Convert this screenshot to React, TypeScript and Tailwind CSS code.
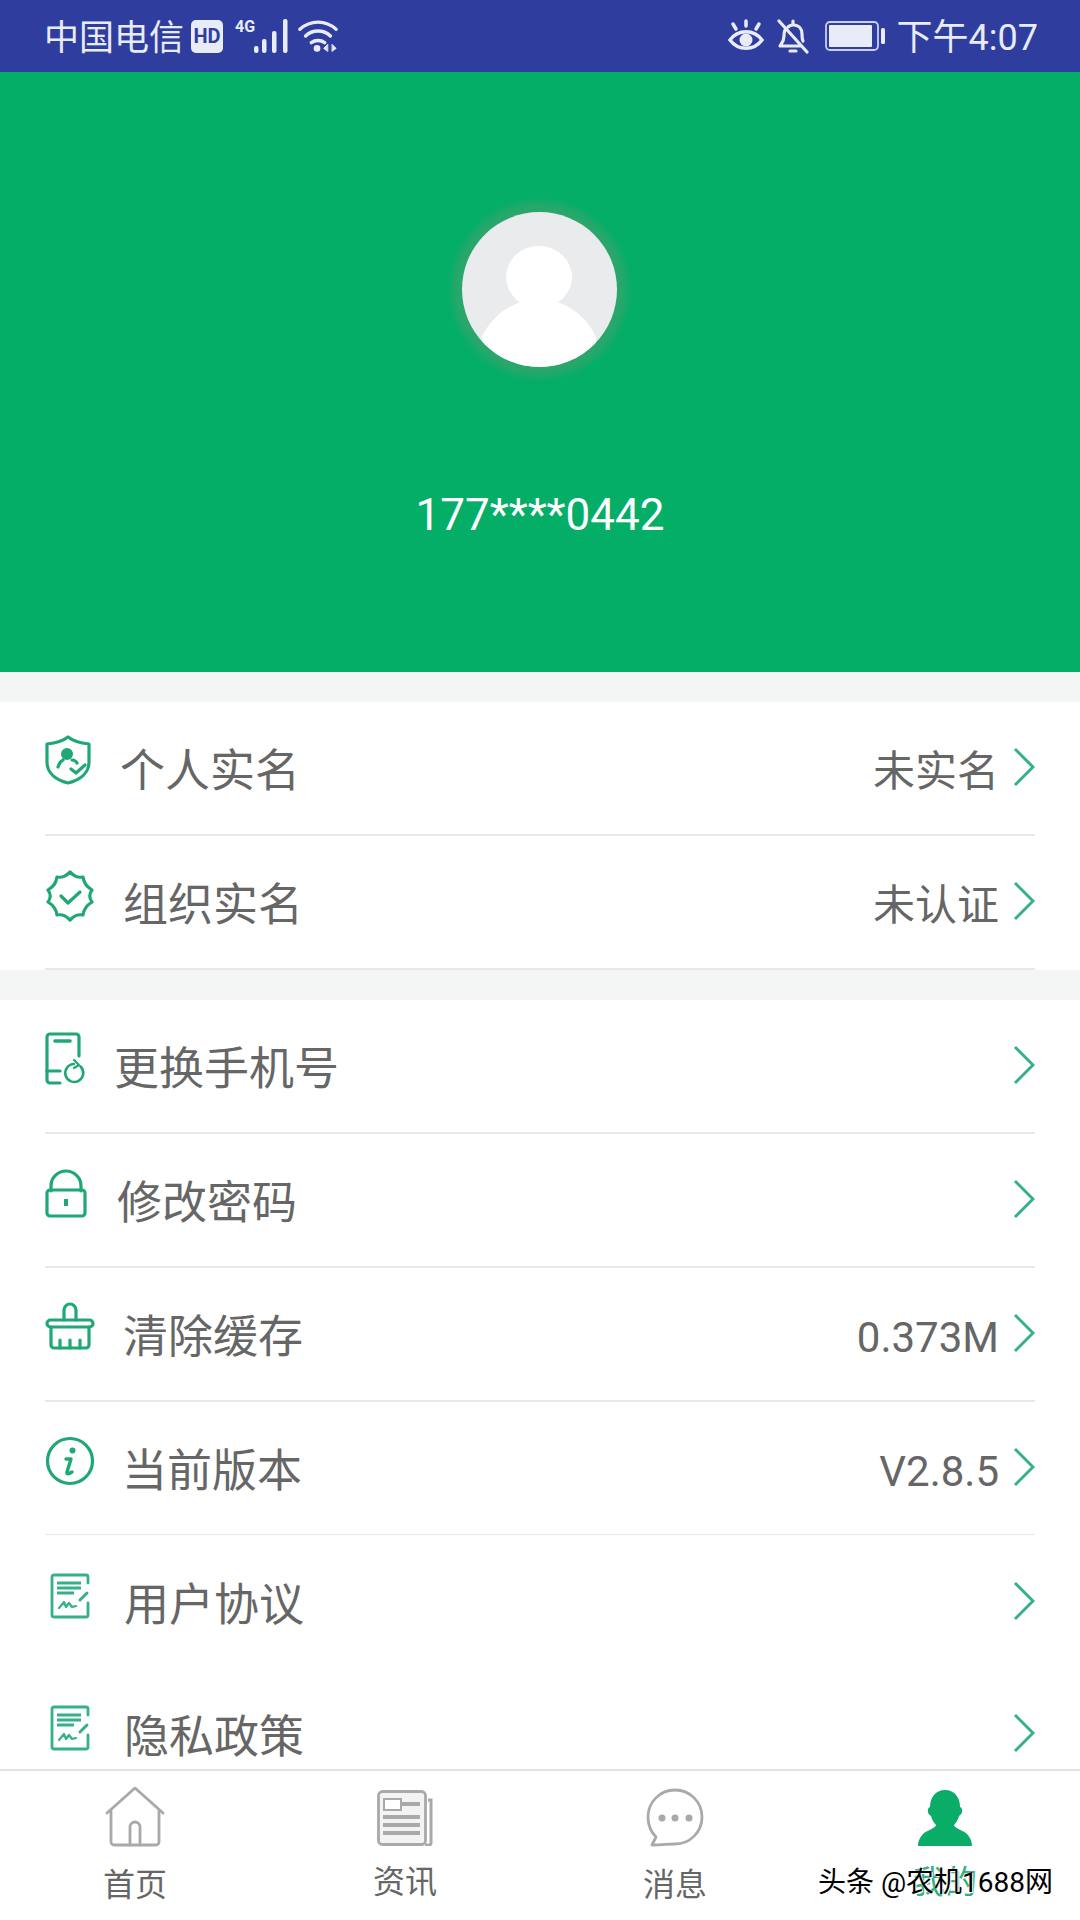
import { ReactNode } from "react";

const GREEN = "#1fa874";

function Chevron() {
  return (
    <svg className="-mt-[2px]" width="22" height="40" viewBox="0 0 22 40" fill="none" stroke="#35b088" strokeWidth="3">
      <path d="M2 2l18 18L2 38" />
    </svg>
  );
}

function ShieldIcon() {
  return (
    <svg width="46" height="50" viewBox="0 0 46 50" fill="none" stroke={GREEN} strokeWidth="3.2" strokeLinecap="round" strokeLinejoin="round">
      <path d="M23 2c5 4 12 6 21 7v18c0 11-9 18-21 21C11 45 2 38 2 27V9c9-1 16-3 21-7z" />
      <circle cx="22" cy="19" r="6" fill={GREEN} stroke="none" />
      <path d="M13 32c1-3 3-6 5-7M26 34l5 4 9-8" />
      <path d="M27 25c2 0 4 1 5 3" />
    </svg>
  );
}

function BadgeIcon() {
  return (
    <svg width="50" height="52" viewBox="0 0 50 52" fill="none" stroke={GREEN} strokeWidth="3.2" strokeLinecap="round" strokeLinejoin="round">
      <path d="M25 2c4 4 7 6 13 5 1 6 3 9 9 13 -3 4-3 8 0 12-5 3-8 6-9 13-6-1-9 1-13 5-4-4-7-6-13-5-1-7-4-10-9-13 3-4 3-8 0-12 6-4 8-7 9-13 6 1 9-1 13-5z" />
      <path d="M16 26l7 7 12-11" />
    </svg>
  );
}

function PhoneIcon() {
  return (
    <svg width="42" height="54" viewBox="0 0 42 54" fill="none" stroke={GREEN} strokeWidth="3.2" strokeLinecap="round" strokeLinejoin="round">
      <path d="M15 51H5a3 3 0 0 1-3-3V5a3 3 0 0 1 3-3h26a3 3 0 0 1 3 3v19" />
      <path d="M10 9h15" strokeWidth="3.6" />
      <path d="M2 39h13" />
      <path d="M35.500 34.500a9 9 0 1 1-6.500-2.500" strokeWidth="2.600" />
      <path d="M29 28l5 5-5 3" strokeWidth="2.200" />
    </svg>
  );
}

function LockIcon() {
  return (
    <svg width="42" height="50" viewBox="0 0 42 50" fill="none" stroke={GREEN} strokeWidth="3.200" strokeLinecap="round" strokeLinejoin="round">
      <path d="M6 23v-5a15 15 0 0 1 30 0v5" />
      <rect x="2" y="22" width="38" height="26" rx="3" />
      <path d="M21 31v7" strokeWidth="4" strokeLinecap="butt" />
    </svg>
  );
}

function BroomIcon() {
  return (
    <svg width="50" height="50" viewBox="0 0 50 50" fill="none" stroke={GREEN} strokeWidth="3.200" strokeLinecap="round" strokeLinejoin="round">
      <path d="M19 18V8a6 6 0 0 1 12 0v10" />
      <rect x="2" y="18" width="46" height="7" rx="3.500" />
      <path d="M6 25v18a3 3 0 0 0 3 3h32a3 3 0 0 0 3-3V25" />
      <path d="M15 46v-8M25 46v-8M35 46v-8" />
    </svg>
  );
}

function InfoIcon() {
  return (
    <svg width="50" height="50" viewBox="0 0 50 50" fill="none" stroke={GREEN} strokeWidth="3.200" strokeLinecap="round">
      <circle cx="25" cy="25" r="22.500" />
      <circle cx="27.500" cy="14.500" r="3" fill={GREEN} stroke="none" />
      <path d="M21 23h5l-4 13c-.6 2 1 2.500 5 0" strokeWidth="3.400" strokeLinejoin="round" />
    </svg>
  );
}

function DocIcon() {
  return (
    <svg width="40" height="46" viewBox="0 0 40 46" fill="none" stroke="#35b088" strokeWidth="2.800" strokeLinecap="round" strokeLinejoin="round">
      <path d="M38 10V4a2 2 0 0 0-2-2H4a2 2 0 0 0-2 2v38a2 2 0 0 0 2 2h32a2 2 0 0 0 2-2V30" />
      <path d="M7 10h24M7 15h24M7 20h17" strokeLinecap="butt" />
      <path d="M9 35l5-6 2 5 3-4 3 4 4-1" strokeWidth="2.200" />
      <path d="M30 27l7-7" strokeWidth="3" />
    </svg>
  );
}

type RowItem = {
  icon: ReactNode;
  iconClass: string;
  label: string;
  value?: string;
  rowClass?: string;
  border?: boolean;
};

const accountRows: RowItem[] = [
  { icon: <ShieldIcon />, iconClass: "w-[75px] -mt-[16px]", label: "个人实名", value: "未实名", border: true },
  { icon: <BadgeIcon />, iconClass: "w-[78px] -mt-[12px]", label: "组织实名", value: "未认证", border: true },
];

const settingRows: RowItem[] = [
  { icon: <PhoneIcon />, iconClass: "w-[69px] -mt-[14px]", label: "更换手机号", border: true },
  { icon: <LockIcon />, iconClass: "w-[72px] -mt-[14px]", label: "修改密码", border: true },
  { icon: <BroomIcon />, iconClass: "w-[78px] -mt-[14px]", label: "清除缓存", value: "0.373M", border: true },
  { icon: <InfoIcon />, iconClass: "w-[77px] -mt-[14px]", label: "当前版本", value: "V2.8.5", border: true },
  { icon: <DocIcon />, iconClass: "w-[79px] pl-[5px] -mt-[12px]", label: "用户协议", rowClass: "-mt-[1px]" },
  { icon: <DocIcon />, iconClass: "w-[79px] pl-[5px] -mt-[12px]", label: "隐私政策", rowClass: "-mt-[2px]" },
];

function MenuRow({ row }: { row: RowItem }) {
  return (
    <div className={`px-[45px] bg-white ${row.rowClass ?? ""}`}>
      <div className={`flex items-center h-[134px] ${row.border ? "border-b-2 border-[#e8e8e8]" : ""}`}>
        <div className={`shrink-0 ${row.iconClass}`}>{row.icon}</div>
        <span className="pt-[7px] text-[45px] text-[#666666]">{row.label}</span>
        <div className="ml-auto flex items-center gap-[14px]">
          {row.value && <span className="pt-[7px] text-[42px] text-[#666666]">{row.value}</span>}
          <Chevron />
        </div>
      </div>
    </div>
  );
}

function StatusBar() {
  return (
    <div className="h-[72px] shrink-0 bg-[#2f3e9e] flex items-center pl-[44px] pr-[42px] text-[#e8ebf8]">
      <span className="pt-[4px] text-[35px] leading-none">中国电信</span>
      <span className="ml-[7px] w-[32px] h-[33px] rounded-[5px] bg-[#e8ebf8] text-[#2f3e9e] text-[20px] font-bold leading-[33px] text-center">HD</span>
      <svg className="ml-[12px]" width="54" height="36" viewBox="0 0 54 36" fill="#e8ebf8">
        <text x="0" y="14" fontSize="16" fontWeight="700" fontFamily="Roboto, sans-serif">4G</text>
        <rect x="19" y="28" width="4.500" height="7" rx="2" />
        <rect x="27" y="21" width="4.500" height="14" rx="2" />
        <rect x="37" y="13" width="4.500" height="22" rx="2" />
        <rect x="48" y="1" width="4.500" height="34" rx="2" />
      </svg>
      <svg className="ml-[9px]" width="40" height="36" viewBox="0 0 42 36" fill="none" stroke="#e8ebf8" strokeWidth="3.500" strokeLinecap="round">
        <path d="M2 11c11-10 27-10 38 0M8 18c7-7 19-7 26 0M14 25c4-3 10-3 14 0" />
        <circle cx="20" cy="31" r="3.500" fill="#e8ebf8" stroke="none" />
        <path d="M31 27l-4 4 4 3zM36 27l4 4-4 3z" fill="#e8ebf8" strokeWidth="1" />
      </svg>
      <div className="ml-auto flex items-center">
        <svg width="36" height="34" viewBox="0 0 36 34" fill="none" stroke="#e8ebf8" strokeWidth="3.500" strokeLinecap="round">
          <path d="M2 21c8-11 24-11 32 0-8 11-24 11-32 0z" />
          <circle cx="18" cy="21" r="6.500" fill="#e8ebf8" stroke="none" />
          <path d="M18 2v5M5 5l3 5M31 5l-3 5" />
        </svg>
        <svg className="ml-[13px]" width="32" height="36" viewBox="0 0 32 36" fill="none" stroke="#e8ebf8" strokeWidth="3.200" strokeLinecap="round" strokeLinejoin="round">
          <path d="M8 12c-1 2-1 4-1 6 0 5-2 7-4 10h20M26 23c-1-2-1-4-1-7 0-5-3-9-9-9-2 0-4 1-5 2" />
          <path d="M16 3v3M13 33h6M2 3l28 31" />
        </svg>
        <svg className="ml-[16px]" width="60" height="32" viewBox="0 0 60 32" fill="none">
          <rect x="1" y="2" width="52" height="28" rx="4" stroke="#c9cfee" strokeWidth="1.800" />
          <rect x="4" y="5" width="43" height="22" rx="1" fill="#e8ebf8" />
          <rect x="56" y="8" width="4" height="16" rx="1.500" fill="#e8ebf8" />
        </svg>
        <span className="ml-[12px] pt-[4px] text-[36px] leading-none">下午4:07</span>
      </div>
    </div>
  );
}

function Profile() {
  return (
    <div className="h-[600px] bg-[#05ae67] flex flex-col items-center pt-[140px]">
      <div className="w-[155px] h-[155px] -ml-[2px] rounded-full bg-[#e9ebec] overflow-hidden shadow-[0_0_6px_10px_#2aa76b]">
        <svg width="155" height="155" viewBox="0 0 155 155" fill="#ffffff">
          <ellipse cx="77" cy="65" rx="33" ry="31" />
          <path d="M20 125c10-22 28-32 42-36 8 6 22 6 30 0 14 4 32 14 42 36v40H20z" />
        </svg>
      </div>
      <div className="mt-[118px] text-[44px] leading-[60px] text-white">177****0442</div>
    </div>
  );
}

function TabBar() {
  return (
    <div className="h-[151px] shrink-0 bg-white border-t-2 border-[#e3e3e3] grid grid-cols-4 relative">
      <div className="flex flex-col items-center pt-[16px]">
        <svg width="60" height="60" viewBox="0 0 60 60" fill="none" stroke="#a9a9a9" strokeWidth="2.800" strokeLinecap="round" strokeLinejoin="round">
          <path d="M2 26L30 1l28 25" />
          <path d="M6 24v31a3 3 0 0 0 3 3h42a3 3 0 0 0 3-3V24" />
          <path d="M25 58V40a5 5 0 0 1 10 0v18" />
        </svg>
        <span className="mt-[20px] text-[32px] leading-[36px] text-[#666666]">首页</span>
      </div>
      <div className="flex flex-col items-center pt-[19px]">
        <svg width="56" height="56" viewBox="0 0 56 56" fill="none">
          <rect x="1.500" y="1.500" width="47" height="53" rx="4" fill="#f3f3f3" stroke="#a9a9a9" strokeWidth="2.800" />
          <path d="M51 10h3v43a2 2 0 0 1-2 2h-4" stroke="#a9a9a9" strokeWidth="3" />
          <rect x="7" y="9" width="17" height="11" fill="#ffffff" stroke="#a9a9a9" strokeWidth="2" />
          <path d="M24 14h19M6 27h37M6 35h37M6 43h37" stroke="#a9a9a9" strokeWidth="4" />
        </svg>
        <span className="mt-[18px] text-[32px] leading-[36px] text-[#666666]">资讯</span>
      </div>
      <div className="flex flex-col items-center pt-[17px]">
        <svg width="58" height="59" viewBox="0 0 58 59" fill="none" stroke="#a9a9a9" strokeWidth="2.800" strokeLinejoin="round">
          <path d="M29 2c15 0 27 12 27 27S44 56 29 56c-7 0-13 1-23 1l4-8C5 44 2 37 2 29 2 14 14 2 29 2z" />
          <circle cx="16" cy="30" r="3.500" fill="#a9a9a9" stroke="none" />
          <circle cx="29" cy="30" r="3.500" fill="#a9a9a9" stroke="none" />
          <circle cx="43" cy="30" r="3.500" fill="#a9a9a9" stroke="none" />
        </svg>
        <span className="mt-[20px] text-[32px] leading-[36px] text-[#666666]">消息</span>
      </div>
      <div className="flex flex-col items-center pt-[19px]">
        <svg width="54" height="56" viewBox="0 0 54 56" fill="#09ad67">
          <path d="M27 0c10 0 15 8 15 17 3 1 3 7-1 9-1 4-3 7-5 9 0 3 8 5 12 8 3 3 6 7 6 13H0c0-6 3-10 6-13 4-3 12-5 12-8-2-2-4-5-5-9-4-2-4-8-1-9C12 8 17 0 27 0z" />
        </svg>
        <span className="mt-[18px] text-[32px] leading-[36px] text-[#2fae80]">我的</span>
      </div>
      <span className="absolute left-[818px] top-[94px] text-[28px] leading-[36px] text-black whitespace-nowrap [text-shadow:0_0_2px_#fff,1px_1px_0_#fff]">
        头条 @农机1688网
      </span>
    </div>
  );
}

export default function App() {
  return (
    <div className="w-[1080px] h-[1920px] flex flex-col overflow-hidden bg-[#f4f5f5] font-['Roboto','Noto_Sans_CJK_SC',sans-serif]">
      <StatusBar />
      <div className="flex-1 overflow-hidden">
        <Profile />
        <div className="mt-[30px]">
          {accountRows.map((row) => (
            <MenuRow key={row.label} row={row} />
          ))}
        </div>
        <div className="mt-[30px]">
          {settingRows.map((row) => (
            <MenuRow key={row.label} row={row} />
          ))}
        </div>
      </div>
      <TabBar />
    </div>
  );
}
